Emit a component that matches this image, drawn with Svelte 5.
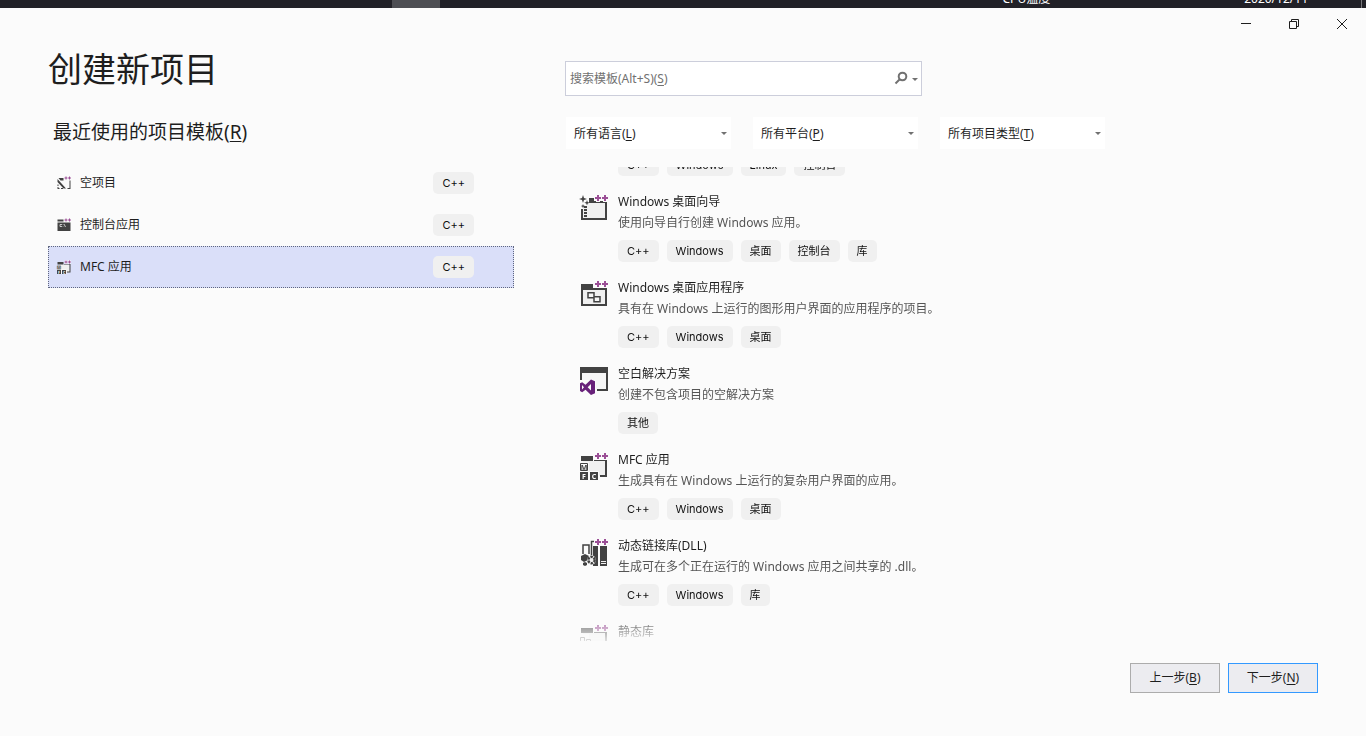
<script lang="ts">
  import { onMount } from 'svelte';

  type Template = {
    icon: string;
    title: string;
    description: string;
    tags: string[];
  };

  const recent = [
    { icon: 'empty', title: '空项目', tag: 'C++' },
    { icon: 'console', title: '控制台应用', tag: 'C++' },
    { icon: 'mfc', title: 'MFC 应用', tag: 'C++' }
  ];

  const filters = $state([
    { id: 'language', name: '所有语言', key: 'L', value: '', options: ['C++', 'C#', 'Python'] },
    { id: 'platform', name: '所有平台', key: 'P', value: '', options: ['Windows', 'Linux'] },
    { id: 'type', name: '所有项目类型', key: 'T', value: '', options: ['桌面', '控制台', '库'] }
  ]);

  const templates: Template[] = [
    { icon: 'console', title: '控制台应用', description: '在 Windows 终端中运行代码。', tags: ['C++', 'Windows', 'Linux', '控制台'] },
    { icon: 'wizard', title: 'Windows 桌面向导', description: '使用向导自行创建 Windows 应用。', tags: ['C++', 'Windows', '桌面', '控制台', '库'] },
    { icon: 'desktop', title: 'Windows 桌面应用程序', description: '具有在 Windows 上运行的图形用户界面的应用程序的项目。', tags: ['C++', 'Windows', '桌面'] },
    { icon: 'solution', title: '空白解决方案', description: '创建不包含项目的空解决方案', tags: ['其他'] },
    { icon: 'mfc', title: 'MFC 应用', description: '生成具有在 Windows 上运行的复杂用户界面的应用。', tags: ['C++', 'Windows', '桌面'] },
    { icon: 'dll', title: '动态链接库(DLL)', description: '生成可在多个正在运行的 Windows 应用之间共享的 .dll。', tags: ['C++', 'Windows', '库'] },
    { icon: 'lib', title: '静态库', description: '生成静态库项目。', tags: ['C++', 'Windows', '库'] }
  ];

  let selected = $state(2);
  let search = $state('');
  let list: HTMLElement;

  onMount(() => {
    list.scrollTop = 69;
  });
</script>

{#snippet icon(name: string)}
  <svg class="icon" viewBox="0 0 28 28" aria-hidden="true">
    {#if name === 'solution'}
      <path fill="#f6f6f6" d="M2 7h24v16H2z" />
      <path fill="#424242" d="M0 1h28v24H17v-2h9V7H2v8H0z" />
      <path fill="#fbfbfb" d="M0 14h16v14H0z" />
      <path fill="#68217a" fill-rule="evenodd" d="M11 13.500l4 1.700v12l-4 1.700-5.500-5.200-3.300 2.500L0 25.100v-7.800l2.200-1.100 3.300 2.500zM11 18l-3.300 3.200L11 24.400zM2 19v4.400l2-2.200z" />
    {:else}
      {#if name === 'empty'}
        <path fill="#424242" d="M3 4h10v5H7zM25 9h2v17h-6v-2h4zM1 6l17 19h-5L1 12zM1 17h2v3H1zM1 22h2v2h2v2H1zM8 24h4v2H8z" />
      {:else if name === 'console'}
        <path fill="#424242" d="M1 3h12v4H1zM1 9h26v17H1z" />
        <path fill="none" stroke="#f0f0f0" stroke-width="1.500" d="M10 13H6v4h4M12 13v1M12 16v1M14 12l3 6" />
      {:else if name === 'dll'}
        <path fill="none" stroke="#424242" stroke-width="1.500" d="M3 16V7h6v9M11.500 17V3.500H14" />
        <path fill="#424242" d="M13 8h5v20h-5zM20 8h7v20h-7z" />
        <path fill="#f0f0f0" d="M21 23h5v1h-5zM21 25h5v1h-5z" />
        <path fill="#424242" d="M1 18l4-2 4 2-1 4-4 2-3-2z" />
        <circle cx="11.500" cy="22" r="4.500" fill="#f0f0f0" />
        <circle cx="11.500" cy="22" r="3.200" fill="none" stroke="#424242" stroke-width="2.500" stroke-dasharray="2.400 1" />
        <path fill="#424242" d="M3 25l2-1 2 1v2l-2 1-2-1z" />
      {:else}
        <path fill="#f0f0f0" d="M3 9h22v15H3z" />
        {#if name === 'wizard'}
          <path fill="#424242" d="M9 4h5v3h13v19H1V15h2v9h22V9H9zM4 12h3v2H4zM4 15h3v2H4zM4 18h3v2H4zM4 21h3v2H4z" />
          <path fill="#fbfbfb" d="M0 0h8v12H0z" />
          <path fill="#424242" d="M3 1l1 3 3 1-3 1-1 3-1-3-3-1 3-1zM7 6l.7 2 2 .7-2 .7-.7 2-.7-2-2-.7 2-.7zM3 10l.6 1.500 1.500.6-1.500.6L3 14.200l-.6-1.500-1.500-.6 1.500-.6z" />
        {:else if name === 'desktop'}
          <path fill="#424242" fill-rule="evenodd" d="M1 4h12v4h14v18H1zM3 10v14h22V10z" />
          <path fill="#f6f6f6" stroke="#424242" stroke-width="1.500" d="M8 12.800h6v5H8zM14 16.800h6v5h-6z" />
        {:else}
          <path fill="#424242" d="M1 4h12v5H1zM14 8h13v17h-7v-2h5V9H14z" />
          <path fill="#fbfbfb" d="M0 10h9v9h10v9H0z" />
          {#if name === 'mfc'}
            <path fill="none" stroke="#424242" d="M.5 11.500h7v7h-7z" />
            <path fill="#424242" d="M0 20h8v8H0zM10 20h8v8h-8z" />
            <g font-size="7" font-weight="700" text-anchor="middle">
              <text x="4" y="18" fill="#424242">M</text>
              <text x="4" y="27" fill="#fff">F</text>
              <text x="14" y="27" fill="#fff">C</text>
            </g>
          {:else}
            <path fill="none" stroke="#424242" d="M.5 13.500h4v4h-4zM6.500 15.500h4v4h-4z" />
          {/if}
        {/if}
      {/if}
      <path fill="none" stroke="#fbfbfb" stroke-width="4" d="M15 4h6M18 0v8M22 4h6M25 0v8" />
      <path fill="none" stroke="#9b4f96" stroke-width="2" d="M15 4h6M18 1v6M22 4h6M25 1v6" />
    {/if}
  </svg>
{/snippet}

<div class="screen">
  <div class="taskbar">
    <span class="taskbar-tab"></span>
    <span class="cpu">CPU温度</span>
    <span class="date">2020/12/11</span>
    <span class="show-desktop"></span>
  </div>

  <div class="titlebar">
    <button aria-label="最小化">
      <svg viewBox="0 0 12 12"><path d="M1 5.500h10" /></svg>
    </button>
    <button aria-label="还原">
      <svg viewBox="0 0 12 12"><path d="M1.500 3.500h7v7h-7zM3.500 3.500v-2h7v7h-2" /></svg>
    </button>
    <button aria-label="关闭">
      <svg viewBox="0 0 12 12"><path d="M1 1l10 10M11 1L1 11" /></svg>
    </button>
  </div>

  <main>
    <section class="recent">
      <h1>创建新项目</h1>
      <h2>最近使用的项目模板(<u>R</u>)</h2>
      <div class="recent-list">
        {#each recent as item, i}
          <button class="recent-item" class:selected={selected === i} onclick={() => (selected = i)}>
            {@render icon(item.icon)}
            <span class="recent-title">{item.title}</span>
            <span class="tag">{item.tag}</span>
          </button>
        {/each}
      </div>
    </section>

    <section class="browse">
      <div class="search">
        <input id="search" type="text" bind:value={search} />
        <label for="search" class:hidden={search !== ''}>搜索模板(Alt+S)(<u>S</u>)</label>
        <svg class="magnifier" viewBox="0 0 14 14" aria-hidden="true">
          <circle cx="8.500" cy="5.500" r="3.800" />
          <path d="M6 8l-4.500 4.500" />
        </svg>
        <span class="arrow"></span>
      </div>

      <div class="filters">
        {#each filters as filter}
          <div class="filter">
            <select id={filter.id} bind:value={filter.value}>
              <option value=""></option>
              {#each filter.options as option}
                <option value={option}>{option}</option>
              {/each}
            </select>
            <label for={filter.id} class:hidden={filter.value !== ''}>{filter.name}(<u>{filter.key}</u>)</label>
            <span class="arrow"></span>
          </div>
        {/each}
      </div>

      <div class="templates" bind:this={list}>
        {#each templates as template}
          <article>
            {@render icon(template.icon)}
            <div>
              <h3>{template.title}</h3>
              <p>{template.description}</p>
              <div class="tags">
                {#each template.tags as tag}
                  <span class="tag">{tag}</span>
                {/each}
              </div>
            </div>
          </article>
        {/each}
      </div>
    </section>
  </main>

  <footer>
    <button>上一步(<u>B</u>)</button>
    <button class="primary">下一步(<u>N</u>)</button>
  </footer>
</div>

<style>
  :global(body) {
    background: #fbfbfb;
  }

  .screen {
    display: flex;
    flex-direction: column;
    height: 100vh;
    overflow: hidden;
    color: #1e1e1e;
    font-family: 'Noto Sans', 'Noto Sans CJK SC', sans-serif;
    font-size: 12px;
    line-height: 20px;
  }

  .screen * {
    box-sizing: border-box;
  }

  button,
  input,
  select {
    font: inherit;
    color: inherit;
    margin: 0;
  }

  h1,
  h2,
  h3,
  p {
    margin: 0;
    font-weight: 400;
  }

  u {
    text-underline-offset: 2px;
  }

  .taskbar {
    display: flex;
    align-items: flex-end;
    flex: none;
    height: 8px;
    overflow: hidden;
    background: #212127;
    color: #fff;
    line-height: 16px;
  }

  .taskbar-tab {
    width: 48px;
    height: 8px;
    margin-left: 392px;
    background: #4d4e53;
  }

  .cpu,
  .date {
    padding-bottom: 1px;
  }

  .cpu {
    margin-left: auto;
    margin-right: 194px;
  }

  .date {
    margin-right: 53px;
  }

  .show-desktop {
    width: 5px;
    height: 8px;
    border-left: 1px solid #77777b;
  }

  .titlebar {
    display: flex;
    justify-content: flex-end;
    flex: none;
    height: 32px;
  }

  .titlebar button {
    display: flex;
    align-items: center;
    justify-content: center;
    width: 48px;
    padding: 0;
    border: 0;
    background: none;
  }

  .titlebar svg {
    width: 12px;
    height: 12px;
    fill: none;
    stroke: #1e1e1e;
  }

  main {
    display: grid;
    grid-template-columns: 466px 1fr;
    gap: 51px;
    flex: 1;
    min-height: 0;
    padding: 0 48px;
  }

  .recent {
    padding-top: 6px;
  }

  h1 {
    font-size: 34px;
    line-height: 46px;
  }

  h2 {
    margin: 26px 0 16px;
    padding-left: 5px;
    font-size: 19px;
    line-height: 28px;
  }

  h3 {
    font-size: 12px;
  }

  .recent-list {
    display: flex;
    flex-direction: column;
  }

  .recent-item {
    display: flex;
    align-items: center;
    height: 42px;
    padding: 0 39px 0 8px;
    border: 1px solid transparent;
    background: none;
    text-align: left;
  }

  .recent-item.selected {
    border: 1px dotted #5f6680;
    background: #dadff9;
  }

  .recent-item .icon {
    width: 14px;
    height: 14px;
    margin-right: 9px;
  }

  .recent-title {
    flex: 1;
  }

  .icon {
    overflow: visible;
  }

  .tag {
    height: 22px;
    padding: 0 9px;
    border-radius: 5px;
    background: #f0f0f0;
    color: #111;
    font-family: Inter, 'Noto Sans CJK SC', sans-serif;
    font-size: 11px;
    line-height: 22px;
    white-space: nowrap;
  }

  .browse {
    display: flex;
    flex-direction: column;
    min-height: 0;
    padding-top: 21px;
  }

  .search {
    position: relative;
    display: flex;
    flex: none;
    width: 357px;
    height: 35px;
  }

  .search input {
    width: 100%;
    padding: 0 50px 0 4px;
    border: 1px solid #cccedb;
    background: #fff;
  }

  .search label {
    position: absolute;
    left: 5px;
    top: 8px;
    color: #717171;
    pointer-events: none;
  }

  .search label.hidden,
  .filter label.hidden {
    display: none;
  }

  .magnifier {
    position: absolute;
    right: 14px;
    top: 10px;
    width: 14px;
    height: 14px;
    fill: none;
    stroke: #717171;
    stroke-width: 2;
  }

  .arrow {
    position: absolute;
    right: 4px;
    top: calc(50% - 1px);
    border: 3px solid transparent;
    border-top-color: #717171;
    border-bottom: 0;
    pointer-events: none;
  }

  .filters {
    display: flex;
    gap: 22px;
    flex: none;
    margin: 21px 0 18px;
    padding-left: 1px;
  }

  .filter {
    position: relative;
    width: 165px;
    height: 32px;
  }

  .filter select {
    width: 100%;
    height: 100%;
    padding: 0 8px;
    border: 0;
    background: #fff;
    appearance: none;
  }

  .filter label {
    position: absolute;
    left: 8px;
    top: 7px;
    pointer-events: none;
  }

  .templates {
    flex: 1;
    min-height: 0;
    overflow-y: auto;
    scrollbar-width: none;
    mask-image: linear-gradient(#000 calc(100% - 34px), rgba(0, 0, 0, 0.15));
  }

  article {
    display: flex;
    gap: 10px;
    padding: 8px 0 8px 15px;
  }

  article .icon {
    flex: none;
    width: 28px;
    height: 28px;
    margin-top: 2px;
  }

  article p {
    color: #555;
    line-height: 22px;
  }

  .tags {
    display: flex;
    gap: 8px;
    margin-top: 6px;
  }

  footer {
    display: flex;
    justify-content: flex-end;
    gap: 8px;
    flex: none;
    padding: 22px 48px 43px;
  }

  footer button {
    width: 90px;
    height: 30px;
    padding: 0;
    border: 1px solid #acacac;
    background: #ececf0;
  }

  footer button.primary {
    border-color: #3399ff;
  }
</style>
